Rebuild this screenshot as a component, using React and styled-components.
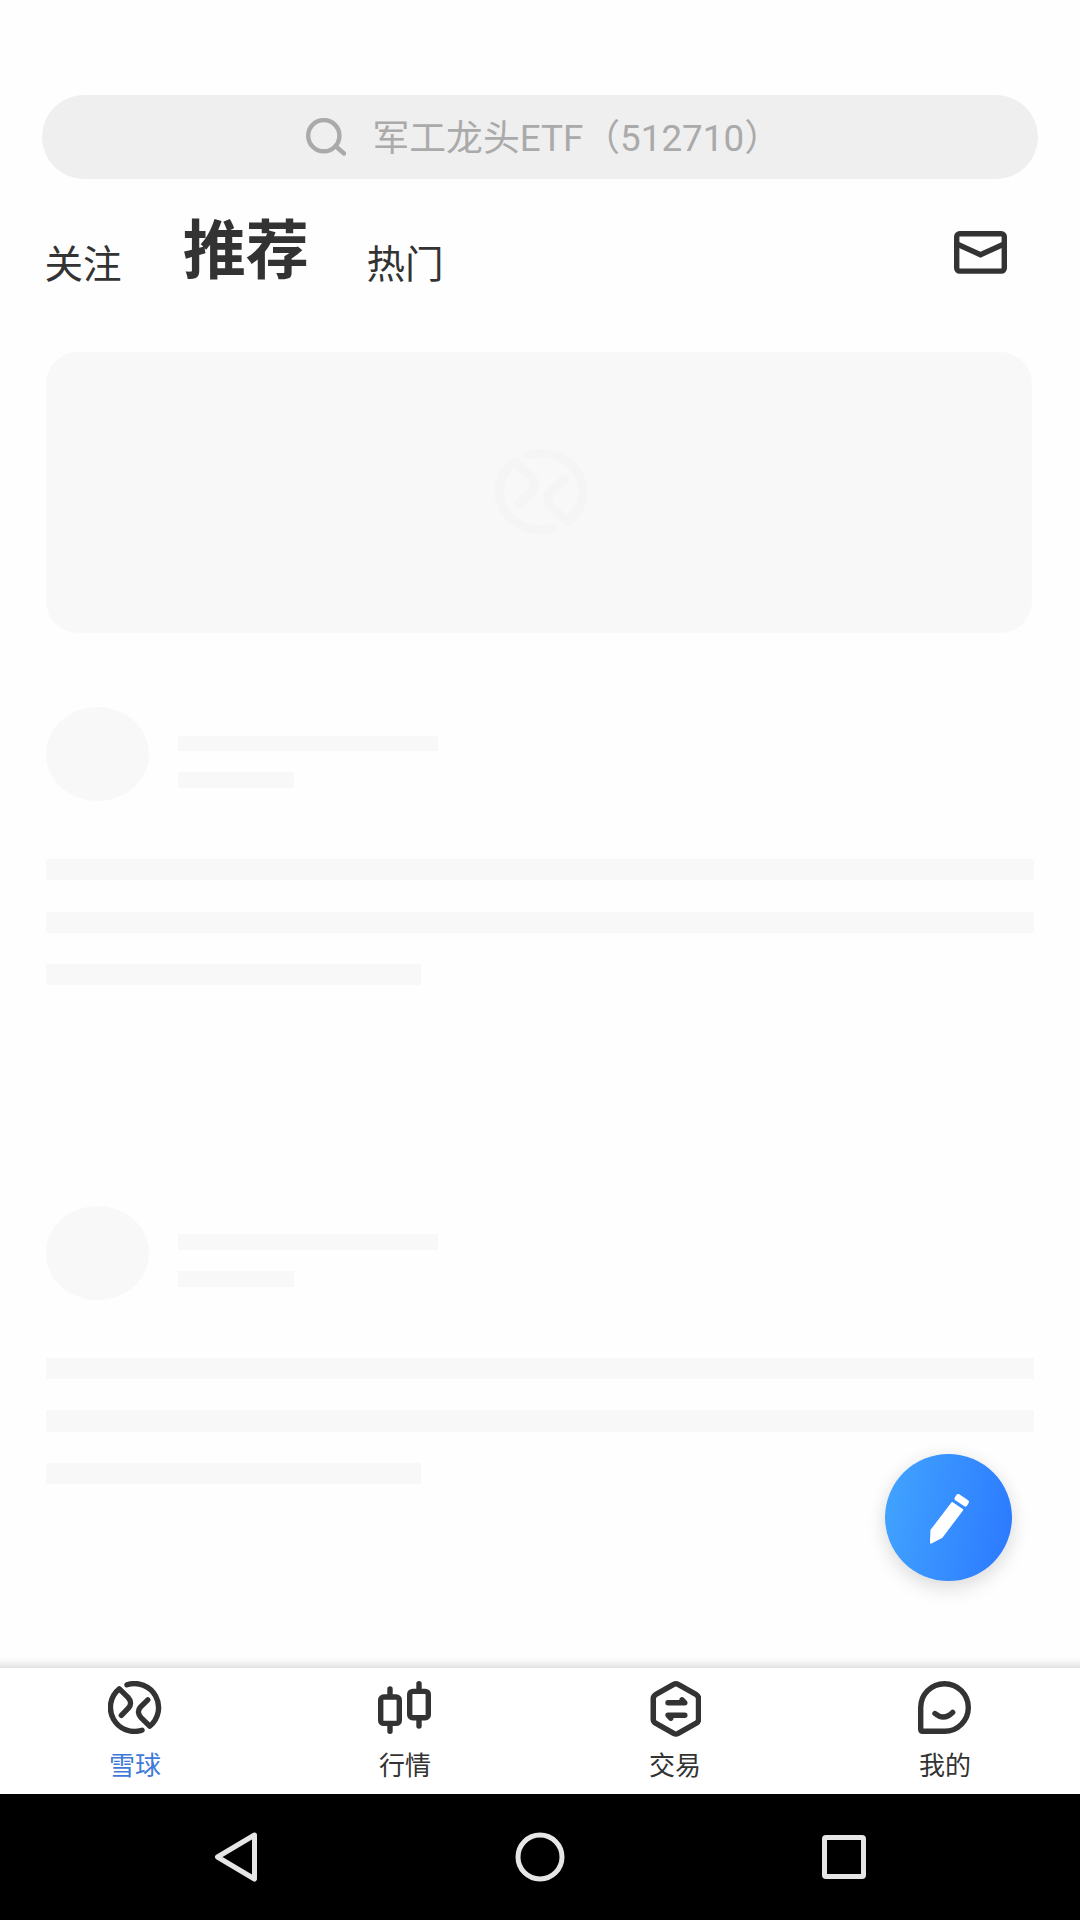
import React from "react";
import styled, { createGlobalStyle } from "styled-components";

const Global = createGlobalStyle`
  * { box-sizing: border-box; }
  body { margin: 0; background: #fefefe; }
`;

const Screen = styled.div`
  width: 1080px;
  height: 1920px;
  display: flex;
  flex-direction: column;
  background: #fefefe;
  color: #333;
  font-family: Roboto, "Noto Sans CJK SC", sans-serif;
  overflow: hidden;
`;

const SearchBar = styled.div`
  margin: 95px 42px 0;
  height: 84px;
  border-radius: 42px;
  background: #efefef;
  color: #aaa;
  display: flex;
  align-items: center;
  padding-left: 264px;
  gap: 26.5px;
  flex: none;
`;

const SearchText = styled.span`
  font-size: 36.8px;
  line-height: 54px;
  padding-top: 4px;
  white-space: nowrap;
`;

const Tabs = styled.nav`
  height: 173px;
  padding: 0 73px 0 44.5px;
  display: flex;
  align-items: flex-start;
  flex: none;
`;

const Tab = styled.span`
  font-size: ${(p) => (p.$active ? 63.2 : 38.6)}px;
  font-weight: ${(p) => (p.$active ? 700 : 400)};
  line-height: ${(p) => (p.$active ? 94 : 58)}px;
  margin-top: ${(p) => (p.$active ? 25 : 57)}px;
  margin-right: ${(p) => (p.$active ? 57.5 : 61)}px;
  white-space: nowrap;
`;

const MailButton = styled.span`
  margin: 52px 0 0 auto;
  line-height: 0;
`;

const Feed = styled.main`
  flex: 1;
  min-height: 0;
  padding: 0 46px;
  display: flex;
  flex-direction: column;
`;

const Banner = styled.div`
  width: 986px;
  height: 280.7px;
  flex: none;
  border-radius: 32px;
  background: #f8f8f8;
  color: #f5f5f5;
  display: flex;
  align-items: center;
  justify-content: center;
  padding: 0 0 2px 4px;
`;

const Post = styled.article`
  height: 498.8px;
  padding-top: 74.2px;
  flex: none;
`;

const PostHead = styled.div`
  display: flex;
  gap: 29px;
  height: 152px;
`;

const Avatar = styled.div`
  width: 103.4px;
  height: 94.5px;
  border-radius: 50%;
  background: #f8f8f8;
`;

const HeadLines = styled.div`
  padding-top: 28.7px;
  display: flex;
  flex-direction: column;
  gap: 20.7px;
`;

const Lines = styled.div`
  display: flex;
  flex-direction: column;
  gap: 31.5px;
`;

const Bar = styled.div`
  width: ${(p) => p.$w}px;
  height: ${(p) => p.$h}px;
  background: #f8f8f8;
`;

const ComposeButton = styled.div`
  position: absolute;
  left: 885px;
  top: 1454px;
  width: 127px;
  height: 127px;
  border-radius: 50%;
  background: linear-gradient(100deg, #42a5ff, #2b78ff);
  box-shadow: 0 8px 20px rgba(0, 0, 0, 0.11), 0 0 18px rgba(0, 0, 0, 0.05);
`;

const BottomBar = styled.footer`
  height: 126px;
  flex: none;
  display: grid;
  grid-template-columns: repeat(4, 1fr);
  background: #fff;
`;

const BarShadow = styled.div`
  height: 12px;
  flex: none;
  background: linear-gradient(rgba(0, 0, 0, 0), rgba(0, 0, 0, 0.03) 45%, rgba(0, 0, 0, 0.11));
`;

const NavItem = styled.div`
  display: flex;
  flex-direction: column;
  align-items: center;
  padding-top: 13px;
`;

const NavIcon = styled.span`
  height: 56px;
  line-height: 0;
  color: #333;
`;

const NavLabel = styled.span`
  margin-top: 10px;
  font-size: 26px;
  line-height: 38px;
  color: ${(p) => (p.$active ? "#3f7ad8" : "#333")};
`;

const SystemBar = styled.div`
  height: 126px;
  flex: none;
  background: #000;
  display: flex;
  justify-content: space-between;
  align-items: center;
  padding: 0 213px 0 214px;
`;

const Stroke = ({ w, h, vw = w, vh = h, sw = 5.4, children }) => (
  <svg width={w} height={h} viewBox={`0 0 ${vw} ${vh}`} preserveAspectRatio="none" fill="none" stroke="currentColor" strokeWidth={sw} strokeLinecap="round" strokeLinejoin="round">
    {children}
  </svg>
);

const Logo = ({ w = 54, h = 53 }) => (
  <Stroke w={w} h={h} vw={w === 54 ? 54 : 53} vh={53}>
    <path d="M19 3.8A24 24 0 0 1 41.7 45.2L33 36.6C30.2 33.6 29.4 29.4 32.4 26.2L39.8 18.8" />
    <path d="M34 49.2A24 24 0 0 1 11.3 7.8L20 16.4C22.8 19.4 23.6 23.6 20.6 26.8L13.4 34.4" />
  </Stroke>
);

const Candles = () => (
  <Stroke w={54} h={53}>
    <rect x="2.7" y="16" width="18.6" height="26.4" rx="3" />
    <path d="M12 8v7M12 43v7.3" />
    <rect x="31.7" y="10.4" width="18.6" height="26.4" rx="3" />
    <path d="M41 2.7v7M41 37v8" />
  </Stroke>
);

const Trade = () => (
  <Stroke w={51} h={56} vw={50}>
    <g transform="translate(.4 0)">
      <path d="M22.8 3.4Q25 2.2 27.2 3.4L45 13.7Q47.2 15.1 47.2 17.6V38.2Q47.2 40.7 45 42.1L27.2 52.4Q25 53.6 22.8 52.4L5 42.1Q2.8 40.7 2.8 38.2V17.6Q2.8 15.1 5 13.7Z" />
      <path d="M17.3 21.8H33.7L31 18.8V21M33.7 34.2H17.3L20 37.2V35" />
    </g>
  </Stroke>
);

const Me = () => (
  <Stroke w={54} h={53}>
    <path d="M2.7 26.5A23.8 23.8 0 1 1 26.5 50.3H4.7Q2.7 50.3 2.7 48.3Z" />
    <path d="M17 32.5Q26 40 34.7 31.3" />
  </Stroke>
);

const navItems = [
  { label: "雪球", icon: <Logo />, active: true },
  { label: "行情", icon: <Candles /> },
  { label: "交易", icon: <Trade /> },
  { label: "我的", icon: <Me /> },
];

const PostSkeleton = () => (
  <Post>
    <PostHead>
      <Avatar />
      <HeadLines>
        <Bar $w={259.5} $h={15.5} />
        <Bar $w={115.5} $h={16} />
      </HeadLines>
    </PostHead>
    <Lines>
      <Bar $w={988} $h={21.2} />
      <Bar $w={988} $h={21.2} />
      <Bar $w={374.6} $h={21.2} />
    </Lines>
  </Post>
);

export default function App() {
  return (
    <Screen>
      <Global />
      <SearchBar>
        <svg width="40" height="38" viewBox="0 0 40 38" fill="none" stroke="currentColor" strokeWidth="4.4" strokeLinecap="round">
          <circle cx="17.8" cy="17.7" r="15.6" />
          <path d="M30 28.5L38 35.5" />
        </svg>
        <SearchText>军工龙头ETF（512710）</SearchText>
      </SearchBar>
      <Tabs>
        <Tab>关注</Tab>
        <Tab $active>推荐</Tab>
        <Tab>热门</Tab>
        <MailButton>
          <Stroke w={53} h={43}>
            <rect x="2.7" y="2.7" width="47.6" height="37.4" rx="3" />
            <path d="M4 13.5L26.5 23.7L49 13.5" strokeLinejoin="miter" />
          </Stroke>
        </MailButton>
      </Tabs>
      <Feed>
        <Banner>
          <Logo w={92} h={85} />
        </Banner>
        <PostSkeleton />
        <PostSkeleton />
      </Feed>
      <BarShadow />
      <BottomBar>
        {navItems.map((n) => (
          <NavItem key={n.label}>
            <NavIcon>{n.icon}</NavIcon>
            <NavLabel $active={n.active}>{n.label}</NavLabel>
          </NavItem>
        ))}
      </BottomBar>
      <SystemBar>
        <svg width="44" height="50" fill="none" stroke="#e6e6e6" strokeWidth="5" strokeLinejoin="round">
          <path d="M40.5 3L3.5 25L40.5 47Z" />
        </svg>
        <svg width="50" height="50" fill="none" stroke="#e6e6e6" strokeWidth="5">
          <circle cx="25" cy="25" r="22" />
        </svg>
        <svg width="45" height="45" fill="none" stroke="#e6e6e6" strokeWidth="5">
          <rect x="2.5" y="2.5" width="39" height="39" rx="1.5" />
        </svg>
      </SystemBar>
      <ComposeButton>
        <svg width="126" height="126" fill="#fff" stroke="#fff" strokeWidth="2" strokeLinejoin="round">
          <path d="M73.2 42L82 47.8L80.4 50.6L71.4 44.6Z" strokeWidth="4" />
          <path d="M67.2 49L77.2 55.8L56.6 83.2L46 88.6L46.4 76.4Z" />
        </svg>
      </ComposeButton>
    </Screen>
  );
}
